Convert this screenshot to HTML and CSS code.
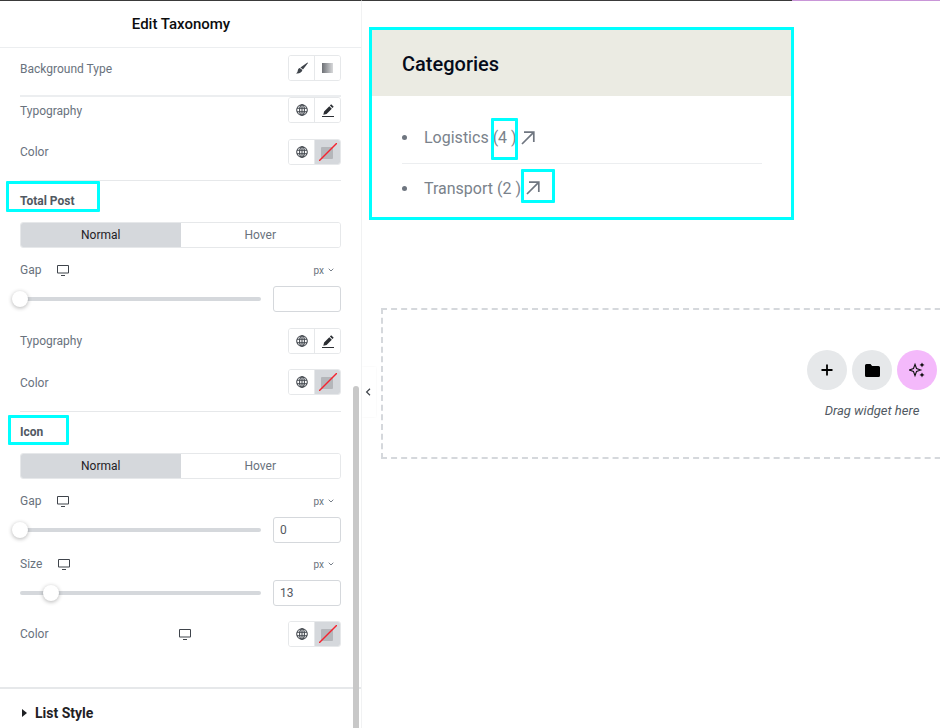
FILE: index.html
```html
<!DOCTYPE html>
<html lang="en">
<head>
<meta charset="utf-8">
<title>Edit Taxonomy</title>
<link rel="stylesheet" href="styles.css">
</head>
<body>
<svg class="defs" width="0" height="0" aria-hidden="true">
  <symbol id="globe" viewBox="0 0 12 12"><g fill="none" stroke="#3f444b" stroke-width="1.05"><circle cx="6" cy="6" r="5.3"/><ellipse cx="6" cy="6" rx="2.4" ry="5.3"/><path d="M1 4.200h10M1 7.800h10M6 .7v10.600"/></g></symbol>
  <symbol id="pen" viewBox="0 0 12 13"><path fill="#2b2e33" d="M9.200 .3l2.500 2.500-1.300 1.300-2.500-2.500zM7.300 2.200l2.500 2.500-5.200 5.200-3.300.8.800-3.300zM0 12h12v1H0z"/></symbol>
  <symbol id="none" viewBox="0 0 18 18"><rect x="2" y="4" width="12" height="12" rx="1" fill="#b4b6ba"/><path d="M0 18L18 0" stroke="#f5232f" stroke-width="1.400"/></symbol>
  <symbol id="desk" viewBox="0 0 12 11"><path fill="#3f444b" d="M1 0h10a1 1 0 0 1 1 1v6.500a1 1 0 0 1-1 1H1a1 1 0 0 1-1-1V1a1 1 0 0 1 1-1zm0 1v6.500h10V1zM4 10h4v1H4z"/></symbol>
  <symbol id="chev" viewBox="0 0 6 4"><path d="M.7 .7L3 3l2.300-2.300" fill="none" stroke="#69727d" stroke-width=".9"/></symbol>
  <symbol id="arrow" viewBox="0 0 14 14"><path d="M1 13L12.600 1.400M3 1.200h9.800v9.800" fill="none" stroke="#6f7680" stroke-width="1.700"/></symbol>
</svg>

<div class="app">
  <aside class="panel">
    <header class="panel-head">Edit Taxonomy</header>

    <div class="row row-bg">
      <span class="label label-low">Background Type</span>
      <div class="choices">
        <span class="choice"><svg width="12" height="12" viewBox="0 0 12 12"><path fill="#3f444b" d="M11.500 .6l.5.5-5 6.400-2.600-2.100zM3.800 6l2.600 2.100c-.5 2.600-3.300 3.700-6.400 3.300 1.500-.8 1.600-1.700 1.800-2.900C2 7.200 2.800 6.300 3.800 6z"/></svg></span>
        <span class="choice"><span class="gradient"></span></span>
      </div>
    </div>
    <hr class="rule rule-bg">
    <div class="row">
      <span class="label label-low">Typography</span>
      <div class="choices">
        <span class="choice"><svg width="12" height="12"><use href="#globe"/></svg></span>
        <span class="choice"><svg width="12" height="13"><use href="#pen"/></svg></span>
      </div>
    </div>
    <div class="row row-color">
      <span class="label">Color</span>
      <div class="choices">
        <span class="choice"><svg width="12" height="12"><use href="#globe"/></svg></span>
        <span class="choice choice-on"><svg width="18" height="18"><use href="#none"/></svg></span>
      </div>
    </div>
    <hr class="rule rule-section">

    <h3 class="section">Total Post</h3>
    <div class="tabs"><span class="tab tab-on">Normal</span><span class="tab">Hover</span></div>
    <div class="slider-head head-first">
      <span class="label">Gap</span><svg class="desk" width="12" height="11"><use href="#desk"/></svg>
      <span class="unit">px <svg width="6" height="4"><use href="#chev"/></svg></span>
    </div>
    <div class="slider-row">
      <div class="track"><span class="knob knob-0"></span></div>
      <div class="field"></div>
    </div>
    <div class="row row-typo">
      <span class="label">Typography</span>
      <div class="choices">
        <span class="choice"><svg width="12" height="12"><use href="#globe"/></svg></span>
        <span class="choice"><svg width="12" height="13"><use href="#pen"/></svg></span>
      </div>
    </div>
    <div class="row row-color2">
      <span class="label label-low">Color</span>
      <div class="choices">
        <span class="choice"><svg width="12" height="12"><use href="#globe"/></svg></span>
        <span class="choice choice-on"><svg width="18" height="18"><use href="#none"/></svg></span>
      </div>
    </div>
    <hr class="rule rule-section rule-section-2">

    <h3 class="section">Icon</h3>
    <div class="tabs"><span class="tab tab-on">Normal</span><span class="tab">Hover</span></div>
    <div class="slider-head head-first">
      <span class="label">Gap</span><svg class="desk" width="12" height="11"><use href="#desk"/></svg>
      <span class="unit">px <svg width="6" height="4"><use href="#chev"/></svg></span>
    </div>
    <div class="slider-row">
      <div class="track"><span class="knob knob-0"></span></div>
      <div class="field">0</div>
    </div>
    <div class="slider-head head-size">
      <span class="label">Size</span><svg class="desk" width="12" height="11"><use href="#desk"/></svg>
      <span class="unit">px <svg width="6" height="4"><use href="#chev"/></svg></span>
    </div>
    <div class="slider-row">
      <div class="track"><span class="knob knob-13"></span></div>
      <div class="field">13</div>
    </div>
    <div class="row row-color3">
      <span class="label">Color</span>
      <svg class="desk-mid" width="12" height="11"><use href="#desk"/></svg>
      <div class="choices">
        <span class="choice"><svg width="12" height="12"><use href="#globe"/></svg></span>
        <span class="choice choice-on"><svg width="18" height="18"><use href="#none"/></svg></span>
      </div>
    </div>

    <div class="collapsed"><span class="caret"></span>List Style</div>

    <span class="mark mark-total"></span>
    <span class="mark mark-icon"></span>
    <span class="scrollbar"></span>
  </aside>

  <button class="collapse" aria-label="Collapse"><svg width="6" height="8" viewBox="0 0 6 8"><path d="M5 .7L1.600 4 5 7.300" fill="none" stroke="#3f444b" stroke-width="1.200"/></svg></button>

  <main class="canvas">
    <div class="topline"><span class="topline-pink"></span></div>
    <section class="card">
      <h2 class="card-title">Categories</h2>
      <ul class="cats">
        <li class="cat"><span class="dot"></span><span>Logistics</span><span class="count count-a">(4 )</span><svg class="arrow" width="14" height="14"><use href="#arrow"/></svg></li>
        <li class="cat"><span class="dot"></span><span>Transport</span><span class="count">(2 )</span><span class="arrow-wrap"><svg class="arrow" width="14" height="14"><use href="#arrow"/></svg></span></li>
      </ul>
    </section>
    <section class="dropzone">
      <div class="drop-inner">
        <div class="drop-buttons">
          <span class="round"><svg width="12" height="12" viewBox="0 0 12 12"><path d="M6 .5v11M.5 6h11" stroke="#000" stroke-width="1.800"/></svg></span>
          <span class="round"><svg width="15" height="13" viewBox="0 0 15 13"><path fill="#000" d="M1.500 0h4l1.600 2h6.400A1.500 1.500 0 0 1 15 3.500v8a1.500 1.500 0 0 1-1.500 1.500h-12A1.500 1.500 0 0 1 0 11.500v-10A1.500 1.500 0 0 1 1.500 0z"/></svg></span>
          <span class="round round-ai"><svg width="16" height="16" viewBox="0 0 16 16"><path d="M6 2.300l1.500 4.200 4.200 1.500-4.200 1.500L6 13.700 4.500 9.500.3 8l4.200-1.500z" fill="none" stroke="#111" stroke-width="1.100"/><path d="M13 .4l.8 1.700 1.700.8-1.700.8-.8 1.700-.8-1.700-1.700-.8 1.700-.8zM13 10.400l.8 1.700 1.700.8-1.700.8-.8 1.700-.8-1.700-1.700-.8 1.700-.8z" fill="#111"/></svg></span>
        </div>
        <p class="drop-text">Drag widget here</p>
      </div>
    </section>
  </main>
</div>
</body>
</html>
```
FILE: styles.css
```css
*, *::before, *::after { box-sizing: border-box; }
html, body { margin: 0; height: 100%; overflow: hidden; background: #fff; }
body { font-family: Roboto, "Liberation Sans", sans-serif; color: #69727d; }
.defs { position: absolute; }
.app { display: flex; height: 728px; width: 940px; overflow: hidden; }

.panel { position: relative; flex: 0 0 362px; height: 728px; border-right: 1px solid #f1f2f3; padding: 0 20px; border-top: 1px solid #3a3a3a; overflow: hidden; }
.panel-head { margin: 0 -20px; height: 47px; border-bottom: 1px solid #eceef0; display: flex; align-items: center; justify-content: center; font-size: 15px; font-weight: 500; color: #0c0d0e; padding: 0 0 1px 1px; }

.row { display: flex; align-items: center; justify-content: space-between; height: 26px; }
.label { font-size: 12px; color: #69727d; line-height: 14px; }
.label-low { padding-top: 1px; }
.row-bg { margin-top: 7px; }
.rule { border: 0; height: 1px; background: #e6e8ea; margin: 0; }
.rule-bg { margin-top: 14px; height: 2px; background: #eceef0; }
.row-color { margin-top: 16px; }
.rule-section { margin-top: 15px; }
.rule-section-2 { margin-top: 16px; }

.choices { display: flex; width: 53px; height: 26px; border: 1px solid #e6e8ea; border-radius: 3px; overflow: hidden; }
.choice { flex: 1; display: flex; align-items: center; justify-content: center; background: #fff; }
.choice:first-child { flex: 0 0 25px; }
.choice + .choice { border-left: 1px solid #e6e8ea; }
.choice-on { background: #d5d8dc; }
.gradient { width: 11px; height: 10px; background: linear-gradient(90deg, #6d7075, #d8d9db); }

.section { margin: 13px 0 0; font-size: 12px; line-height: 14px; font-weight: 700; color: #515962; }
.tabs { display: flex; height: 26px; margin-top: 14px; border: 1px solid #e6e8ea; border-radius: 3px; overflow: hidden; font-size: 12px; }
.tab { flex: 1; display: flex; align-items: center; justify-content: center; background: #fff; color: #69727d; }
.tab-on { background: #d5d8dc; color: #1f2124; }

.slider-head { display: flex; align-items: center; height: 14px; }
.head-first { margin-top: 15px; }
.head-size { margin-top: 14px; }
.desk { margin-left: 16px; }
.unit { margin-left: auto; margin-right: 7px; font-size: 10px; color: #69727d; display: flex; align-items: center; gap: 4px; }
.slider-row { display: flex; align-items: center; justify-content: space-between; height: 26px; margin-top: 9px; }
.track { position: relative; width: 241px; height: 4px; background: #d5d8dc; border-radius: 2px; }
.knob { position: absolute; top: -6px; width: 16px; height: 16px; border-radius: 50%; background: #fff; box-shadow: 0 1px 4px rgba(0,0,0,.3); }
.knob-0 { left: -8px; }
.knob-13 { left: 23px; }
.field { width: 68px; height: 26px; border: 1px solid #d5d8dc; border-radius: 3px; font-size: 12px; color: #55595f; padding-left: 6px; display: flex; align-items: center; }
.row-typo { margin-top: 16px; }
.row-color2 { margin-top: 15px; }
.row-color3 { margin-top: 15px; }
.desk-mid { position: absolute; left: 179px; }

.collapsed { position: absolute; left: 0; right: 0; top: 686px; height: 60px; border-top: 2px solid #e6e8ea; padding: 16px 0 0 35px; font-size: 14px; line-height: 16px; font-weight: 700; color: #1f2124; background: #fff; }
.caret { position: absolute; left: 22px; top: 20px; border-left: 5px solid #1f2124; border-top: 4px solid transparent; border-bottom: 4px solid transparent; }

.mark { position: absolute; border: 3px solid #0ff; border-radius: 1px; pointer-events: none; }
.mark-total { left: 6px; top: 180px; width: 94px; height: 31px; }
.mark-icon { left: 8px; top: 414px; width: 61px; height: 30px; }
.scrollbar { position: absolute; left: 353px; top: 385px; width: 6px; height: 345px; background: #c8c8c8; border-radius: 3px 3px 0 0; }

.collapse { flex: 0 0 14px; height: 50px; margin-top: 367px; border: 0; padding: 0 2px 0 0; background: #fff; box-shadow: 0 0 2px rgba(0,0,0,.05); display: flex; align-items: center; justify-content: center; }

.canvas { position: relative; flex: 1; margin-left: -14px; padding: 0 0 0 7px; min-width: 0; }
.topline { height: 1px; background: #3a3a3a; margin-left: -7px; display: flex; justify-content: flex-end; }
.topline-pink { width: 148px; background: #c996d8; }
.card { width: 425px; height: 193px; margin-top: 26px; border: 3px solid #0ff; }
.card-title { margin: 0; height: 66px; background: #ebebe3; padding-left: 30px; font-size: 20px; font-weight: 500; line-height: 68px; color: #060b1a; }
.cats { list-style: none; margin: 0 0 0 30px; padding: 16px 0 0; width: 360px; }
.cat { display: flex; align-items: center; font-size: 16px; color: #7a828b; }
.cat:first-child { border-bottom: 1px solid #eceef0; height: 52px; }
.cat + .cat { height: 48px; }
.dot { width: 5px; height: 5px; border-radius: 50%; background: #6f7680; margin-right: 17px; }
.count { margin-left: 4px; }
.count-a { position: relative; }
.count-a::after { content: ""; position: absolute; left: -2px; top: -10px; width: 27px; height: 42px; border: 3px solid #0ff; border-radius: 1px; }
.arrow { margin-left: 4px; }
.arrow-wrap { position: relative; display: flex; margin-left: 1px; }
.arrow-wrap::after { content: ""; position: absolute; left: -1px; top: -12px; width: 34px; height: 34px; border: 3px solid #0ff; border-radius: 1px; }

.dropzone { margin-top: 88px; margin-left: 12px; width: 600px; height: 151px; border: 2px dashed #d5d8dc; }
.drop-inner { width: 130px; margin-left: 424px; padding-top: 40px; }
.drop-buttons { display: flex; gap: 5px; }
.round { width: 40px; height: 40px; border-radius: 50%; background: #e6e8ea; display: flex; align-items: center; justify-content: center; flex: none; }
.round-ai { background: #f4b9fb; }
.drop-text { margin: 13px 0 0; font-size: 13px; font-style: italic; color: #515962; text-align: center; }
```
